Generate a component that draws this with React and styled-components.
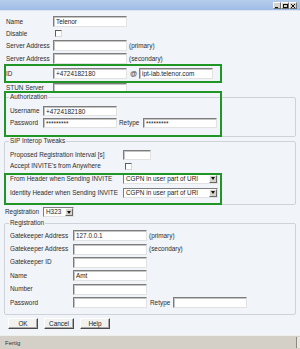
import styled, { createGlobalStyle } from 'styled-components'

const GlobalStyle = createGlobalStyle`
  html, body {
    margin: 0;
    padding: 0;
  }
  body {
    background: #f1f4f8;
    font-family: "Liberation Sans", Arial, sans-serif;
  }
`

const Window = styled.div`
  position: relative;
  width: 300px;
  height: 349px;
  display: flex;
  flex-direction: column;
  background: #f1f4f8;
  color: #2e2e2e;
  font-size: 6.4px;
  line-height: 8px;
  overflow: hidden;
`

const TitleBar = styled.div`
  flex: none;
  height: 10px;
  display: flex;
  justify-content: flex-end;
  align-items: center;
  padding-right: 3px;
  background: linear-gradient(#b6cdec, #9fbde5);
  border-bottom: 1px solid #dbe5f3;
`

const TitleButton = styled.span`
  width: 8px;
  height: 7px;
  box-sizing: border-box;
  display: flex;
  align-items: center;
  justify-content: center;
  background: #d6d3cc;
  border: 1px solid;
  border-color: #fafafa #6f6f6f #6f6f6f #fafafa;
  margin-top: 1px;
`

const Content = styled.div`
  padding: 4px 4px 0 4px;
`

const Row = styled.div`
  display: flex;
  align-items: center;
  height: ${({ $h }) => $h || 13}px;
  padding-left: ${({ $indent }) => $indent ?? 2}px;
  margin-top: ${({ $mt }) => $mt || 0}px;
  white-space: nowrap;
`

const HighlightRow = styled.div`
  display: flex;
  align-items: center;
  width: 218px;
  height: 19px;
  box-sizing: border-box;
  margin-top: -1px;
  border: 2px solid #1f9626;
`

const Label = styled.span`
  flex: none;
  width: ${({ $w }) => $w}px;
  white-space: nowrap;
  overflow: hidden;
`

const Field = styled.input`
  flex: none;
  width: ${({ $w }) => $w || 74}px;
  height: ${({ $h }) => $h || 11}px;
  box-sizing: border-box;
  margin: 0;
  padding: 0 2px;
  font-family: inherit;
  font-size: 6.4px;
  color: #222;
  background: #fff;
  border: 1px solid;
  border-color: #7d7d7d #e2e2e2 #e2e2e2 #7d7d7d;
  box-shadow: inset 1px 1px 0 #c4c4c4;
  outline: none;
`

const Note = styled.span`
  margin-left: ${({ $ml }) => $ml ?? 2}px;
  width: ${({ $w }) => ($w ? `${$w}px` : 'auto')};
  flex: none;
`

const At = styled.span`
  margin: 0 2px 0 3px;
  font-size: 7px;
`

const CheckBox = styled.span`
  flex: none;
  width: 7px;
  height: 7px;
  box-sizing: border-box;
  margin-left: 2px;
  background: #fff;
  border: 1px solid;
  border-color: #5e5e5e #d8d8d8 #d8d8d8 #5e5e5e;
`

const Section = styled.div`
  position: relative;
`

const Group = styled.fieldset`
  margin: 0;
  min-width: 0;
  padding: ${({ $pt }) => $pt}px 0 ${({ $pb }) => $pb}px 5px;
  border: 1px solid #cfd3d9;
  border-radius: 2px;
`

const Legend = styled.legend`
  margin-left: -1px;
  padding: 0 1px;
  font-size: 6.4px;
  line-height: 8px;
`

const Highlight = styled.div`
  position: absolute;
  left: 0;
  top: ${({ $top }) => $top}px;
  width: 218px;
  height: ${({ $h }) => $h}px;
  box-sizing: border-box;
  border: 2px solid #1f9626;
  pointer-events: none;
`

const Select = styled.div`
  flex: none;
  width: ${({ $w }) => $w}px;
  height: 10px;
  box-sizing: border-box;
  display: flex;
  background: #fff;
  border: 1px solid;
  border-color: #7d7d7d #e2e2e2 #e2e2e2 #7d7d7d;
`

const SelectText = styled.span`
  flex: 1;
  padding-left: 2px;
  line-height: 8px;
  overflow: hidden;
  white-space: nowrap;
  color: #222;
`

const SelectArrow = styled.span`
  flex: none;
  width: 8px;
  box-sizing: border-box;
  display: flex;
  align-items: center;
  justify-content: center;
  background: #d6d3cc;
  border: 1px solid;
  border-color: #f8f8f8 #6a6a6a #6a6a6a #f8f8f8;
`

const ButtonRow = styled.div`
  display: flex;
  gap: 6px;
  padding-left: 4px;
  margin-top: 3px;
`

const Button = styled.span`
  width: 30px;
  height: 11px;
  box-sizing: border-box;
  display: flex;
  align-items: center;
  justify-content: center;
  background: #f1f1ef;
  border: 1px solid;
  border-color: #ffffff #4a4a4a #4a4a4a #ffffff;
  box-shadow: inset -1px -1px 0 #a8a8a8;
  color: #222;
`

const StatusBar = styled.div`
  margin-top: auto;
  flex: none;
  height: 14px;
  box-sizing: border-box;
  display: flex;
  align-items: center;
  background: #d4d0c8;
  border-top: 1px solid #eeeeea;
  font-size: 6px;
  color: #333;
`

const StatusText = styled.span`
  flex: 1;
  padding-left: 5px;
`

const StatusPanel = styled.span`
  width: 3px;
  height: 11px;
  border-left: 1px solid #8e8a82;
  background: #e8e6e1;
`

const Arrow = () => (
  <svg width="4" height="3" viewBox="0 0 4 3">
    <path d="M0 0h4L2 3z" fill="#111" />
  </svg>
)

const DropDown = ({ w, children }) => (
  <Select $w={w}>
    <SelectText>{children}</SelectText>
    <SelectArrow><Arrow /></SelectArrow>
  </Select>
)

const App = () => (
  <Window>
    <GlobalStyle />
    <TitleBar>
      <TitleButton>
        <svg width="4" height="4" viewBox="0 0 4 4"><path d="M0 3h3v1H0z" fill="#111" /></svg>
      </TitleButton>
      <TitleButton>
        <svg width="5" height="4" viewBox="0 0 5 4"><path d="M0 0h5v4H0zM1 1v2h3V1z" fill="#111" fillRule="evenodd" /></svg>
      </TitleButton>
      <TitleButton>
        <svg width="4" height="4" viewBox="0 0 4 4"><path d="M0 0l4 4M4 0L0 4" stroke="#111" strokeWidth="1" /></svg>
      </TitleButton>
    </TitleBar>

    <Content>
      <Row>
        <Label $w={47}>Name</Label>
        <Field readOnly value="Telenor" />
      </Row>
      <Row $h={11}>
        <Label $w={47}>Disable</Label>
        <CheckBox />
      </Row>
      <Row>
        <Label $w={47}>Server Address</Label>
        <Field readOnly value="" />
        <Note>(primary)</Note>
      </Row>
      <Row>
        <Label $w={47}>Server Address</Label>
        <Field readOnly value="" />
        <Note>(secondary)</Note>
      </Row>
      <HighlightRow>
        <Label $w={47}>ID</Label>
        <Field readOnly value="+4724182180" />
        <At>@</At>
        <Field readOnly value="ipt-lab.telenor.com" />
      </HighlightRow>
      <Row $h={10}>
        <Label $w={47}>STUN Server</Label>
        <Field readOnly value="" $h={10} />
      </Row>

      <Section>
        <Group $pt={4} $pb={7}>
          <Legend>Authorization</Legend>
          <Row $h={12} $indent={0}>
            <Label $w={33}>Username</Label>
            <Field readOnly value="+4724182180" $h={10} />
          </Row>
          <Row $h={12} $indent={0}>
            <Label $w={33}>Password</Label>
            <Field readOnly value="*********" $h={10} />
            <Note $w={24}>Retype</Note>
            <Field readOnly value="*********" $h={10} />
          </Row>
        </Group>
        <Highlight $top={-2} $h={46} />
      </Section>

      <Section>
        <Group $pt={4} $pb={5}>
          <Legend>SIP Interop Tweaks</Legend>
          <Row $h={12} $indent={0}>
            <Label $w={113}>Proposed Registration Interval [s]</Label>
            <Field readOnly value="" $w={28} $h={10} />
          </Row>
          <Row $h={10} $indent={0}>
            <Label $w={113}>Accept INVITE's from Anywhere</Label>
            <CheckBox />
          </Row>
          <Row $h={13} $indent={0} $mt={1}>
            <Label $w={113}>From Header when Sending INVITE</Label>
            <DropDown w={95}>CGPN in user part of URI</DropDown>
          </Row>
          <Row $h={13} $indent={0} $mt={1}>
            <Label $w={113}>Identity Header when Sending INVITE</Label>
            <DropDown w={95}>CGPN in user part of URI</DropDown>
          </Row>
        </Group>
        <Highlight $top={36} $h={32} />
      </Section>

      <Row $h={14} $indent={1}>
        <Label $w={38}>Registration</Label>
        <DropDown w={31}>H323</DropDown>
      </Row>

      <Section>
        <Group $pt={2} $pb={5}>
          <Legend>Registration</Legend>
          <Row $h={13.4} $indent={0}>
            <Label $w={63}>Gatekeeper Address</Label>
            <Field readOnly value="127.0.0.1" />
            <Note>(primary)</Note>
          </Row>
          <Row $h={13.4} $indent={0}>
            <Label $w={63}>Gatekeeper Address</Label>
            <Field readOnly value="" />
            <Note>(secondary)</Note>
          </Row>
          <Row $h={13.4} $indent={0}>
            <Label $w={63}>Gatekeeper ID</Label>
            <Field readOnly value="" />
          </Row>
          <Row $h={13.4} $indent={0}>
            <Label $w={63}>Name</Label>
            <Field readOnly value="Amt" />
          </Row>
          <Row $h={13.4} $indent={0}>
            <Label $w={63}>Number</Label>
            <Field readOnly value="" />
          </Row>
          <Row $h={13.4} $indent={0}>
            <Label $w={63}>Password</Label>
            <Field readOnly value="" />
            <Note $ml={3} $w={23}>Retype</Note>
            <Field readOnly value="" />
          </Row>
        </Group>
      </Section>

      <ButtonRow>
        <Button>OK</Button>
        <Button>Cancel</Button>
        <Button>Help</Button>
      </ButtonRow>
    </Content>

    <StatusBar>
      <StatusText>Fertig</StatusText>
      <StatusPanel />
    </StatusBar>
  </Window>
)

export default App
